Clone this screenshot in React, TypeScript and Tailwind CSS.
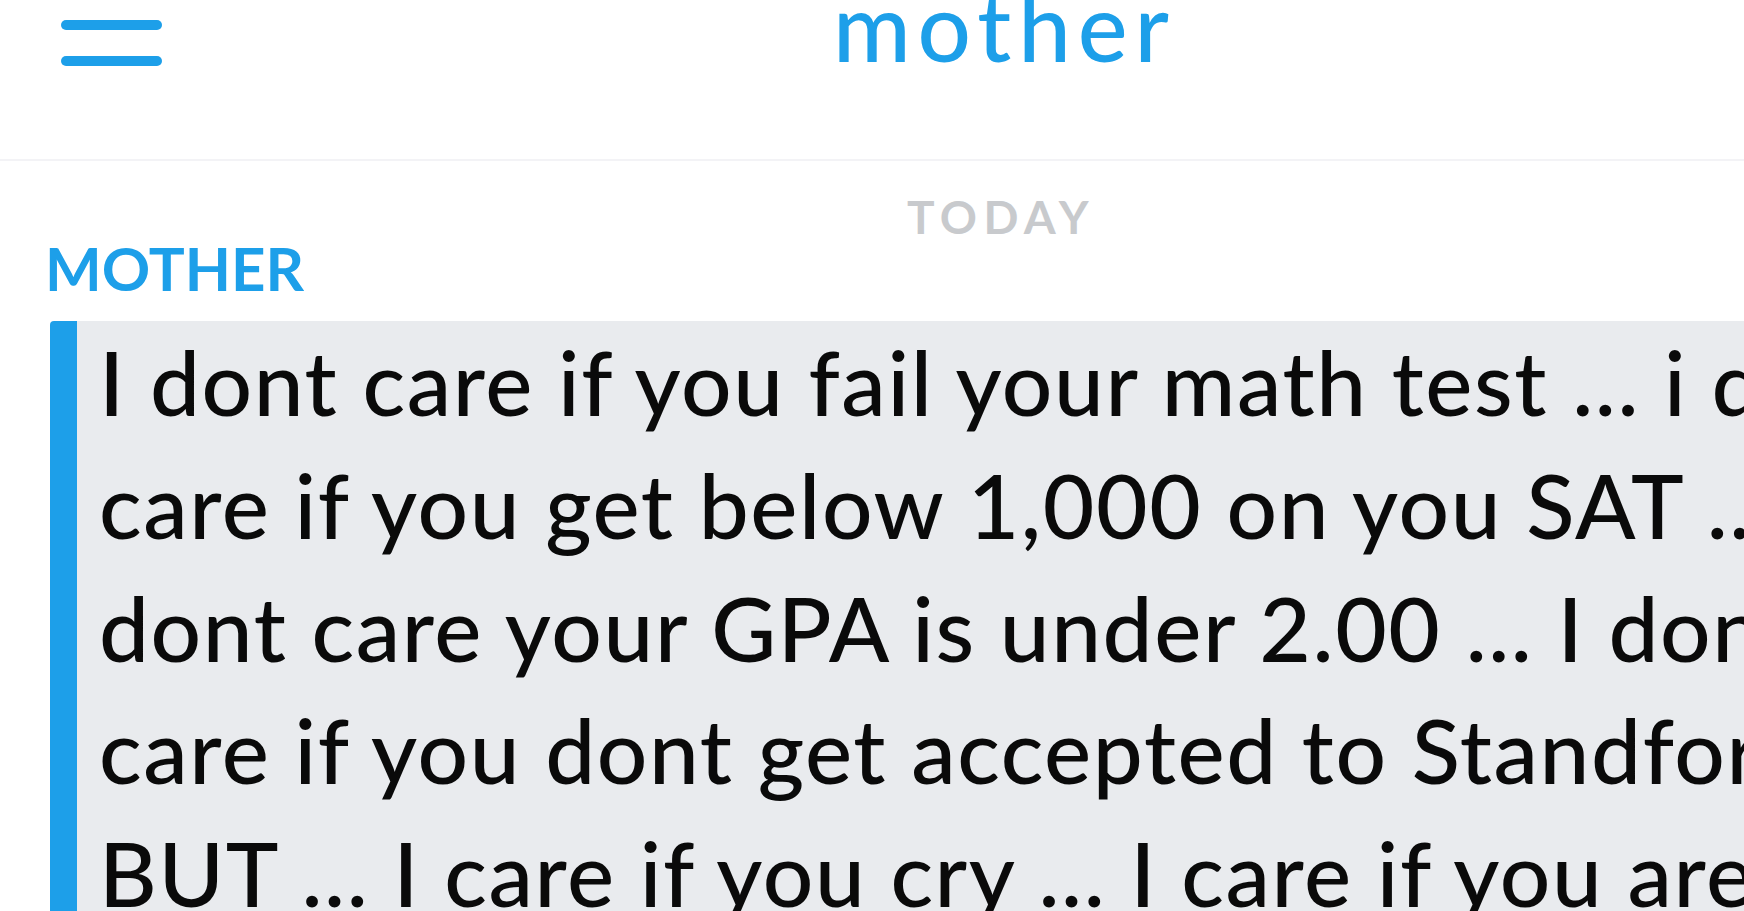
import React from 'react';

const lines = [
  'I dont care if you fail your math test ... i dont',
  'care if you get below 1,000 on you SAT ... i',
  'dont care your GPA is under 2.00 ... I dont',
  'care if you dont get accepted to Standford ...',
  'BUT ... I care if you cry ... I care if you are',
];

function MenuButton() {
  return (
    <button className="flex flex-col gap-[26px] pl-[61px] pt-[20px]" aria-label="menu">
      <span className="block h-[10px] w-[101px] rounded-full bg-[#1d9fe9]" />
      <span className="block h-[10px] w-[101px] rounded-full bg-[#1d9fe9]" />
    </button>
  );
}

export default function App() {
  return (
    <div className="h-[911px] w-full overflow-hidden bg-white font-['Lato',sans-serif]">
      <div className="w-[2002px]">
        <header className="grid h-[161px] grid-cols-[1fr_auto_1fr] border-b-2 border-[#f3f3f6]">
          <div>
            <MenuButton />
          </div>
          <h1 className="-mt-[21px] pl-[7px] text-[94px] leading-none font-medium tracking-[7px] text-[#1d9fe9]">
            mother
          </h1>
          <div />
        </header>

        <div className="mt-[33px] text-center text-[46px] leading-none font-bold tracking-[0.14em] text-[#c8cacd]">
          TODAY
        </div>

        <div className="-mt-[2px] pl-[45px] text-[60px] leading-none font-bold text-[#1d9fe9]">MOTHER</div>

        {/* chat bubble: blue accent strip + grey body */}
        <div className="mt-[23px] flex h-[600px]">
          <div className="ml-[50px] w-[27px] rounded-tl-[4px] bg-[#1d9fe9]" />
          <div className="flex-1 bg-[#e9ebee] pl-[22px] text-[89px] leading-[122.75px] font-medium tracking-[1.6px] text-[#0a0a0a]">
            {lines.map((line, i) => (
              <p key={i} className="whitespace-nowrap">
                {line}
              </p>
            ))}
          </div>
        </div>
      </div>
    </div>
  );
}
